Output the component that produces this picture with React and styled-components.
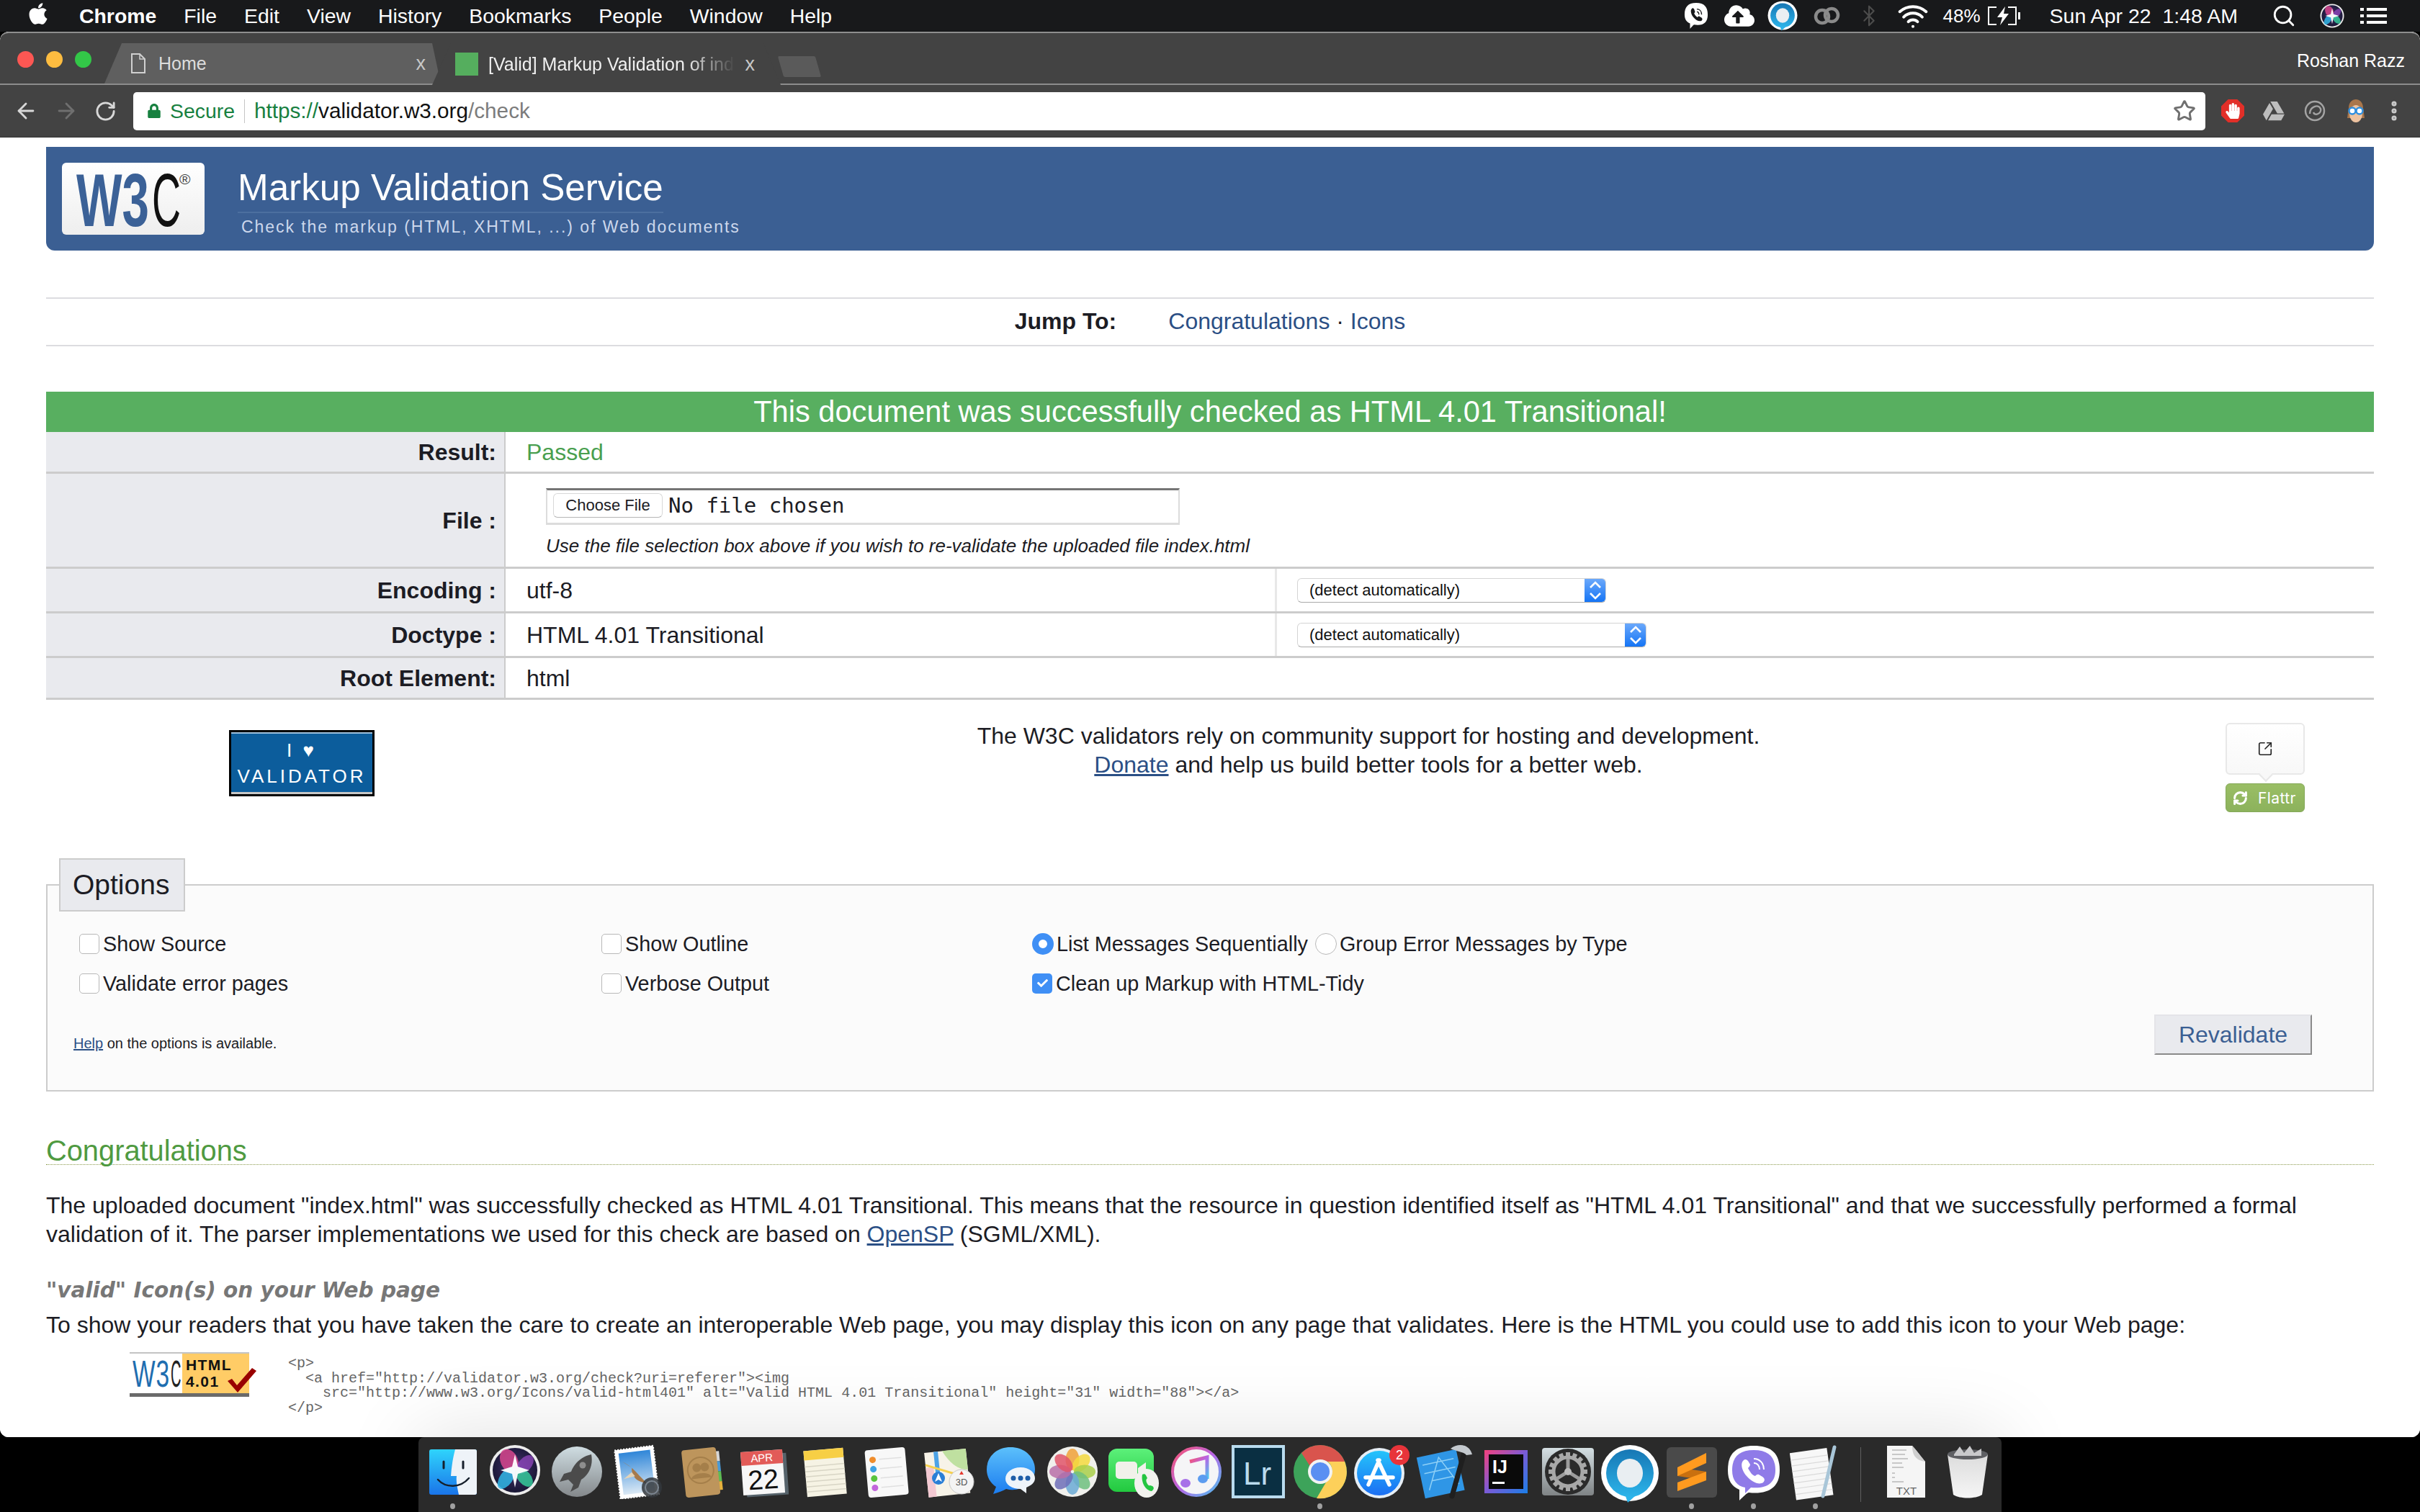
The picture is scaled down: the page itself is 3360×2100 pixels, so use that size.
import styled, { createGlobalStyle } from "styled-components";
import {
  ArrowLeft,
  ArrowRight,
  RotateCw,
  Star,
  Search,
  Bluetooth,
  Wifi,
  SquareArrowOutUpRight,
  EllipsisVertical,
  RefreshCw,
} from "lucide-react";
import { FaApple, FaLock, FaHandPaper, FaGoogleDrive, FaCloudUploadAlt, FaCheck } from "react-icons/fa";

const SANS = `"Liberation Sans", Arial, sans-serif`;
const MONO = `"Liberation Mono", "Courier New", monospace`;

const GlobalStyle = createGlobalStyle`
  html, body {
    margin: 0;
    padding: 0;
    background: #000;
  }
  body {
    font-family: ${SANS};
  }
  svg text {
    font-family: ${SANS};
  }
`;

const MENU_ITEMS = ["File", "Edit", "View", "History", "Bookmarks", "People", "Window", "Help"];

/* ---------- drawn icons ---------- */

const SiriIcon = ({ size = 72 }) => (
  <svg width={size} height={size} viewBox="0 0 72 72">
    <defs>
      <radialGradient id="siriBg" cx="50%" cy="45%" r="60%">
        <stop offset="0" stopColor="#43306e" />
        <stop offset="1" stopColor="#15152f" />
      </radialGradient>
    </defs>
    <circle cx="36" cy="36" r="35" fill="#ececec" />
    <circle cx="36" cy="36" r="31" fill="url(#siriBg)" />
    <ellipse cx="28" cy="23" rx="12" ry="17" fill="#d8468e" opacity="0.85" transform="rotate(-25 28 23)" />
    <ellipse cx="50" cy="28" rx="9" ry="15" fill="#9a4ac9" opacity="0.7" transform="rotate(40 50 28)" />
    <ellipse cx="24" cy="47" rx="9" ry="17" fill="#31b7e8" opacity="0.85" transform="rotate(35 24 47)" />
    <ellipse cx="49" cy="46" rx="9" ry="15" fill="#37d6a0" opacity="0.8" transform="rotate(-40 49 46)" />
    <polygon points="36,14 40,31 56,36 40,41 36,60 32,41 16,36 32,31" fill="#fff" opacity="0.95" />
  </svg>
);

const Finder = () => (
  <svg width="72" height="76" viewBox="0 0 72 76">
    <defs>
      <linearGradient id="finderBg" x1="0" y1="0" x2="0" y2="1">
        <stop offset="0" stopColor="#2fd4fc" />
        <stop offset="1" stopColor="#1a74e9" />
      </linearGradient>
    </defs>
    <rect x="3" y="7" width="66" height="63" rx="3" fill="url(#finderBg)" />
    <path d="M39 7H66a3 3 0 0 1 3 3V67a3 3 0 0 1-3 3H44C42 60 40 52 41 44H33C34 30 36 18 39 7Z" fill="#eef3f8" />
    <path d="M23 24V33M50 24V33" stroke="#16202c" strokeWidth="3" strokeLinecap="round" />
    <path d="M15 49C26 61 46 61 58 47" stroke="#16202c" strokeWidth="2.5" fill="none" strokeLinecap="round" />
  </svg>
);

const Launchpad = () => (
  <svg width="72" height="76" viewBox="0 0 72 76">
    <defs>
      <linearGradient id="launchBg" x1="0" y1="0" x2="0" y2="1">
        <stop offset="0" stopColor="#cfdde2" />
        <stop offset="1" stopColor="#84888b" />
      </linearGradient>
    </defs>
    <circle cx="36" cy="38" r="35" fill="url(#launchBg)" />
    <path
      d="M56 14C42 17 32 27 28 38L18 41 12 52 24 49 31 56 27 66 38 60 42 49C52 43 59 30 56 14Z"
      fill="#4b4b4b"
    />
    <circle cx="44" cy="29" r="4.5" fill="#8e8e8e" />
  </svg>
);

const Mail = () => (
  <svg width="72" height="76" viewBox="0 0 72 76">
    <defs>
      <linearGradient id="mailSky" x1="0" y1="0" x2="0" y2="1">
        <stop offset="0" stopColor="#2f86d8" />
        <stop offset="1" stopColor="#dbe9f5" />
      </linearGradient>
    </defs>
    <g transform="rotate(-7 32 38)">
      <rect x="6" y="5" width="54" height="68" fill="#fff" stroke="#fff" strokeWidth="2" strokeDasharray="2 2" />
      <rect x="11" y="10" width="44" height="58" fill="url(#mailSky)" />
      <path d="M15 22C24 28 31 36 36 44L46 57 36 52C28 48 25 38 27 32Z" fill="#a67a4c" />
      <path d="M26 38L14 46 30 44Z" fill="#e3d3b8" />
    </g>
    <circle cx="54" cy="60" r="14" fill="#33373c" opacity="0.85" />
    <circle cx="54" cy="60" r="9" fill="none" stroke="#7d8792" strokeWidth="2" />
  </svg>
);

const Contacts = () => (
  <svg width="72" height="76" viewBox="0 0 72 76">
    <g transform="rotate(-6 36 38)">
      <rect x="58" y="12" width="6" height="14" fill="#d7d7d7" />
      <rect x="58" y="26" width="6" height="14" fill="#4b9ad6" />
      <rect x="58" y="40" width="6" height="14" fill="#5ebc54" />
      <rect x="58" y="54" width="6" height="12" fill="#e7b23c" />
      <rect x="12" y="6" width="48" height="66" rx="4" fill="#bd955c" />
      <circle cx="36" cy="36" r="18" fill="none" stroke="#a57f4a" strokeWidth="2" />
      <circle cx="31" cy="32" r="6" fill="#a57f4a" />
      <circle cx="42" cy="32" r="6" fill="#a57f4a" />
      <path d="M22 47C24 38 48 38 50 47Z" fill="#a57f4a" />
    </g>
  </svg>
);

const Calendar = () => (
  <svg width="72" height="76" viewBox="0 0 72 76">
    <g transform="rotate(-4 36 38)">
      <rect x="12" y="14" width="58" height="58" fill="#56636b" />
      <rect x="7" y="9" width="58" height="60" fill="#f7f7f7" />
      <rect x="7" y="9" width="58" height="19" fill="#e25b58" />
      <text x="36" y="24" textAnchor="middle" fontSize="15" fill="#fff">APR</text>
      <text x="36" y="62" textAnchor="middle" fontSize="38" fill="#111">22</text>
    </g>
  </svg>
);

const Notes = () => (
  <svg width="72" height="76" viewBox="0 0 72 76">
    <g transform="rotate(-5 36 38)">
      <rect x="9" y="7" width="55" height="64" fill="#f6f3e4" />
      <path d="M9 7H64V20H9Z" fill="#f7cf45" />
      <path
        d="M9 29H64M9 36H64M9 43H64M9 50H64M9 57H64M9 64H64"
        stroke="#d8d5c5"
        strokeWidth="1.5"
      />
    </g>
  </svg>
);

const Reminders = () => (
  <svg width="72" height="76" viewBox="0 0 72 76">
    <g transform="rotate(-5 36 38)">
      <rect x="8" y="6" width="56" height="66" rx="4" fill="#f8f8f8" />
      <circle cx="18" cy="20" r="4.5" fill="#f08d2c" />
      <circle cx="18" cy="33" r="4.5" fill="#3da2e4" />
      <circle cx="18" cy="46" r="4.5" fill="#58c43e" />
      <circle cx="18" cy="59" r="4.5" fill="#c266db" />
      <path d="M27 20H58M27 33H58M27 46H58M27 59H58" stroke="#e0e0e0" strokeWidth="1.5" />
    </g>
  </svg>
);

const MapsIcon = () => (
  <svg width="72" height="76" viewBox="0 0 72 76">
    <g transform="rotate(-6 32 38)">
      <rect x="5" y="9" width="58" height="62" fill="#f7f3e8" />
      <path d="M30 9H63V38C50 38 38 26 30 9Z" fill="#bfe0a0" />
      <path d="M5 30H16V71H5Z" fill="#f3c9d2" />
      <path d="M18 9H24V50H18Z" fill="#4da3e6" />
      <path d="M5 26L63 50" stroke="#f6d04e" strokeWidth="3" />
    </g>
    <circle cx="22" cy="47" r="9" fill="#2a7fd6" />
    <polygon points="22,40 27,52 22,49 17,52" fill="#fff" />
    <circle cx="54" cy="52" r="17" fill="#f4f4f4" stroke="#c9c9c9" />
    <polygon points="54,37 57,42 51,42" fill="#e5392f" />
    <text x="54" y="57" textAnchor="middle" fontSize="13" fill="#555">3D</text>
  </svg>
);

const Messages = () => (
  <svg width="72" height="76" viewBox="0 0 72 76">
    <defs>
      <linearGradient id="msgBg" x1="0" y1="0" x2="0" y2="1">
        <stop offset="0" stopColor="#5cc0fb" />
        <stop offset="1" stopColor="#1b7cf0" />
      </linearGradient>
    </defs>
    <path d="M36 4C16 4 3 18 3 35C3 45 8 54 16 59L12 69C20 67 26 64 30 62C47 67 70 56 70 35C70 18 56 4 36 4Z" fill="url(#msgBg)" />
    <path d="M50 32C38 32 29 39 29 48C29 56 38 62 50 62L58 68 58 60C65 57 70 53 70 47C70 39 62 32 50 32Z" fill="#eef4fa" />
    <circle cx="40" cy="47" r="3.5" fill="#1f5ea8" />
    <circle cx="50" cy="47" r="3.5" fill="#1f5ea8" />
    <circle cx="60" cy="47" r="3.5" fill="#1f5ea8" />
  </svg>
);

const PETALS = ["#f0a13a", "#f5d93f", "#a9cf4a", "#6fbf7f", "#6baad6", "#6f6fb8", "#b86fa8", "#e0556a"];

const Photos = () => (
  <svg width="72" height="76" viewBox="0 0 72 76">
    <circle cx="36" cy="38" r="35" fill="#f0f0ec" />
    {PETALS.map((color, i) => (
      <ellipse
        key={color}
        cx="36"
        cy="21"
        rx="9.5"
        ry="15"
        fill={color}
        opacity="0.85"
        transform={`rotate(${i * 45} 36 38)`}
      />
    ))}
  </svg>
);

const FaceTime = () => (
  <svg width="72" height="76" viewBox="0 0 72 76">
    <defs>
      <linearGradient id="ftBg" x1="0" y1="0" x2="0" y2="1">
        <stop offset="0" stopColor="#5cf07a" />
        <stop offset="1" stopColor="#22c93f" />
      </linearGradient>
    </defs>
    <rect x="0" y="6" width="63" height="60" rx="12" fill="url(#ftBg)" />
    <rect x="10" y="24" width="30" height="24" rx="5" fill="#f1f1ea" />
    <path d="M41 33L52 25V47L41 39Z" fill="#f1f1ea" />
    <ellipse cx="53" cy="54" rx="17" ry="20" fill="#f2f2ee" />
    <path d="M47 42C45 52 51 64 60 65C63 63 64 60 61 58L58 57C56 58 55 57 53 53C52 50 52 49 54 47L52 43C51 41 49 41 47 42Z" fill="#25c541" />
  </svg>
);

const MusicIcon = () => (
  <svg width="72" height="76" viewBox="0 0 72 76">
    <defs>
      <linearGradient id="musicRing" x1="0" y1="0" x2="1" y2="1">
        <stop offset="0" stopColor="#f9536d" />
        <stop offset="0.5" stopColor="#b765e6" />
        <stop offset="1" stopColor="#4cc4ef" />
      </linearGradient>
    </defs>
    <circle cx="36" cy="38" r="33" fill="#f5f5f7" stroke="url(#musicRing)" strokeWidth="4" />
    <path d="M27 24L51 18V48" fill="none" stroke="url(#musicRing)" strokeWidth="5" />
    <path d="M27 24V54" fill="none" stroke="url(#musicRing)" strokeWidth="5" />
    <ellipse cx="21" cy="54" rx="7" ry="6" fill="#a770e8" />
    <ellipse cx="45" cy="48" rx="7" ry="6" fill="#5c9cf0" />
  </svg>
);

const Lightroom = () => (
  <svg width="76" height="76" viewBox="0 0 76 76">
    <rect x="1" y="1" width="74" height="74" fill="#b9dbee" />
    <rect x="5" y="5" width="66" height="66" fill="#0a2f42" />
    <text x="17" y="56" fontSize="44" fill="#b9dbee">Lr</text>
  </svg>
);

const ChromeIcon = () => (
  <svg width="76" height="76" viewBox="0 0 76 76">
    <circle cx="38" cy="38" r="37" fill="#3da35a" />
    <path d="M38 1A37 37 0 0 1 72 24H38A14 14 0 0 0 25 32L12 12A37 37 0 0 1 38 1Z" fill="#d9544d" />
    <path d="M72 24A37 37 0 0 1 33 75L50 46A14 14 0 0 0 48 24Z" fill="#fdd05a" />
    <circle cx="38" cy="38" r="17" fill="#f3f3f3" />
    <circle cx="38" cy="38" r="13" fill="#5a8ff2" />
  </svg>
);

const AppStore = () => (
  <svg width="78" height="76" viewBox="0 0 78 76">
    <defs>
      <linearGradient id="asBg" x1="0" y1="0" x2="0" y2="1">
        <stop offset="0" stopColor="#25c4fb" />
        <stop offset="1" stopColor="#1b6ef3" />
      </linearGradient>
    </defs>
    <circle cx="35" cy="40" r="35" fill="#e6eef5" />
    <circle cx="35" cy="40" r="31" fill="url(#asBg)" />
    <path d="M35 22L20 56M33 22L49 56M16 46H54" stroke="#fff" strokeWidth="5.5" strokeLinecap="round" />
    <circle cx="63" cy="15" r="14" fill="#e8343a" />
    <text x="63" y="21" textAnchor="middle" fontSize="18" fill="#fff">2</text>
  </svg>
);

const Xcode = () => (
  <svg width="78" height="76" viewBox="0 0 78 76">
    <g transform="rotate(-12 34 40)">
      <rect x="6" y="12" width="56" height="58" fill="#2f96e6" />
      <path
        d="M14 60L36 18 56 60M20 48H50M12 24H56M12 36H56"
        stroke="#8fd0f6"
        strokeWidth="1.5"
        fill="none"
      />
    </g>
    <path d="M68 8L50 72" stroke="#1f1f1f" strokeWidth="7" strokeLinecap="round" />
    <path d="M48 6C58 -2 74 -1 78 14L70 15C66 10 56 10 48 6Z" fill="#c4c9ce" />
  </svg>
);

const IntelliJ = () => (
  <svg width="64" height="76" viewBox="0 0 64 76">
    <defs>
      <linearGradient id="ijBg" x1="0" y1="0" x2="1" y2="1">
        <stop offset="0" stopColor="#f5407c" />
        <stop offset="0.5" stopColor="#7a5bd6" />
        <stop offset="1" stopColor="#1a7fe8" />
      </linearGradient>
    </defs>
    <rect x="2" y="8" width="60" height="60" fill="url(#ijBg)" />
    <rect x="8" y="14" width="48" height="48" fill="#0a0a0a" />
    <text x="13" y="40" fontSize="25" fontWeight="700" fill="#fff">IJ</text>
    <rect x="13" y="52" width="17" height="3" fill="#fff" />
  </svg>
);

const SETTING_TEETH = Array.from({ length: 16 }, (_, i) => i * 22.5);

const SystemPrefs = () => (
  <svg width="72" height="76" viewBox="0 0 72 76">
    <defs>
      <linearGradient id="prefBg" x1="0" y1="0" x2="0" y2="1">
        <stop offset="0" stopColor="#d4dfe3" />
        <stop offset="1" stopColor="#7f8385" />
      </linearGradient>
    </defs>
    <rect x="0" y="5" width="72" height="66" rx="4" fill="url(#prefBg)" />
    <circle cx="36" cy="38" r="32" fill="#2b2b2b" />
    {SETTING_TEETH.map((deg) => (
      <rect key={deg} x="33" y="11" width="6" height="9" fill="#a8a8a8" transform={`rotate(${deg} 36 38)`} />
    ))}
    <circle cx="36" cy="38" r="20" fill="none" stroke="#a8a8a8" strokeWidth="5" />
    <path d="M36 38V20M36 38L20 48M36 38L52 48" stroke="#9c9c9c" strokeWidth="5" />
    <circle cx="36" cy="38" r="5" fill="#bbb" />
  </svg>
);

const AlfredBubble = ({ width = 82, height = 82 }) => (
  <svg width={width} height={height} viewBox="0 0 82 82">
    <defs>
      <linearGradient id="bubbleRing" x1="0" y1="0" x2="0" y2="1">
        <stop offset="0" stopColor="#1777b4" />
        <stop offset="1" stopColor="#2cb4ea" />
      </linearGradient>
    </defs>
    <ellipse cx="41" cy="40" rx="40" ry="39" fill="#fff" />
    <ellipse cx="41" cy="40" rx="33" ry="33" fill="url(#bubbleRing)" />
    <ellipse cx="41" cy="40" rx="18" ry="20" fill="#e9eef2" />
    <polygon points="35,72 48,72 38,81" fill="#2cb4ea" />
  </svg>
);

const Sublime = () => (
  <svg width="72" height="76" viewBox="0 0 72 76">
    <rect x="1" y="4" width="70" height="70" rx="6" fill="#4a4a4a" />
    <polygon points="16,32 16,44 56,50 56,38" fill="#c9700f" />
    <polygon points="56,12 56,26 16,44 16,32" fill="#ff9a1f" />
    <polygon points="56,38 56,50 16,65 16,53" fill="#ff9a1f" />
  </svg>
);

const ViberGlyph = ({ size = 36 }) => (
  <svg width={size} height={size * 1.12} viewBox="0 0 36 40">
    <path d="M18 1C6 1 1 7 1 18C1 25 4 29 9 31V39C12 36 14 33 15 33C28 35 35 30 35 18C35 7 30 1 18 1Z" fill="#fff" />
    <path d="M12 9C9 11 10 17 14 22C18 27 23 29 26 27C28 25 27 23 25 22L23 21C22 20 21 21 20 22C18 21 16 19 15 16C16 15 17 14 16 13L15 10C14 9 13 8 12 9Z" fill="#18191b" />
    <path d="M19 10C23 10 26 13 26 18M19 14C21 14 22 16 22 18" stroke="#18191b" strokeWidth="1.5" fill="none" />
  </svg>
);

const ViberDock = () => (
  <svg width="76" height="80" viewBox="0 0 76 80">
    <path d="M38 2C12 2 2 14 2 36C2 50 7 58 18 63V78C24 72 28 68 31 67C58 70 74 60 74 36C74 14 64 2 38 2Z" fill="#fff" />
    <path d="M38 8C17 8 8 18 8 36C8 50 15 58 26 60V68L34 60C56 62 68 54 68 36C68 18 59 8 38 8Z" fill="#8f7be8" />
    <path d="M24 22C19 26 21 36 28 44C35 52 45 57 51 53C54 50 53 47 50 45L45 42C43 41 41 43 40 44C36 43 33 39 30 33C31 32 33 30 33 28L30 23C28 21 26 20 24 22Z" fill="#fff" />
    <path d="M38 20C46 20 52 26 52 35M38 26C43 26 46 30 46 35" stroke="#fff" strokeWidth="2" fill="none" />
  </svg>
);

const TextEdit = () => (
  <svg width="72" height="80" viewBox="0 0 72 80">
    <g transform="rotate(-8 32 40)">
      <rect x="4" y="8" width="52" height="66" fill="#f7f7f7" />
      <path
        d="M4 18H56M4 26H56M4 34H56M4 42H56M4 50H56M4 58H56M4 66H56"
        stroke="#dadada"
        strokeWidth="1.2"
      />
    </g>
    <path d="M62 4L46 72" stroke="#a9c6d8" strokeWidth="5" strokeLinecap="round" />
  </svg>
);

const TxtDoc = () => (
  <svg width="60" height="76" viewBox="0 0 60 76">
    <path d="M3 2H38L56 24V74H3Z" fill="#f5f5f5" />
    <path d="M38 2C38 14 42 22 56 24C48 14 44 8 38 2Z" fill="#cfcfcf" />
    <path d="M10 8H30M10 14H28M10 20H32M10 26H24M10 32H26M10 40H14M10 46H14M10 52H26" stroke="#9a9a9a" strokeWidth="1" />
    <text x="30" y="70" textAnchor="middle" fontSize="15" fill="#666">TXT</text>
  </svg>
);

const Trash = () => (
  <svg width="62" height="76" viewBox="0 0 62 76">
    <defs>
      <linearGradient id="trashBg" x1="0" y1="0" x2="0" y2="1">
        <stop offset="0" stopColor="#dcdcdc" />
        <stop offset="1" stopColor="#f6f6f6" />
      </linearGradient>
    </defs>
    <path d="M3 14L11 70C20 76 42 76 51 70L59 14Z" fill="url(#trashBg)" />
    <ellipse cx="31" cy="14" rx="28" ry="7" fill="#5f6064" />
    <path d="M12 14L20 3 26 12 34 2 40 12 50 6 50 16 12 16Z" fill="#c9c9cb" />
  </svg>
);

const DOCK_APPS = [
  { id: "finder", Icon: Finder, running: true },
  { id: "siri", Icon: SiriIcon },
  { id: "launchpad", Icon: Launchpad },
  { id: "mail", Icon: Mail },
  { id: "contacts", Icon: Contacts },
  { id: "calendar", Icon: Calendar },
  { id: "notes", Icon: Notes },
  { id: "reminders", Icon: Reminders },
  { id: "maps", Icon: MapsIcon },
  { id: "messages", Icon: Messages },
  { id: "photos", Icon: Photos },
  { id: "facetime", Icon: FaceTime },
  { id: "music", Icon: MusicIcon },
  { id: "lightroom", Icon: Lightroom },
  { id: "chrome", Icon: ChromeIcon, running: true },
  { id: "appstore", Icon: AppStore },
  { id: "xcode", Icon: Xcode },
  { id: "intellij", Icon: IntelliJ },
  { id: "prefs", Icon: SystemPrefs },
  { id: "bubble", Icon: AlfredBubble },
  { id: "sublime", Icon: Sublime, running: true },
  { id: "viber", Icon: ViberDock, running: true },
  { id: "textedit", Icon: TextEdit, running: true },
];

const App = () => (
  <Screen>
    <GlobalStyle />
    <MenuBar>
      <AppleMark>
        <FaApple size={34} />
      </AppleMark>
      <MenuItem $bold>Chrome</MenuItem>
      {MENU_ITEMS.map((item) => (
        <MenuItem key={item}>{item}</MenuItem>
      ))}
      <StatusArea>
        <StatusSlot>
          <ViberGlyph size={34} />
        </StatusSlot>
        <StatusSlot $left={22}>
          <FaCloudUploadAlt size={42} />
        </StatusSlot>
        <StatusSlot $left={18}>
          <AlfredBubble width={42} height={42} />
        </StatusSlot>
        <StatusSlot $left={21}>
          <svg width="39" height="30" viewBox="0 0 39 30">
            <circle cx="13" cy="16" r="9" fill="none" stroke="#8a8a8a" strokeWidth="4.5" />
            <circle cx="26" cy="14" r="9" fill="none" stroke="#8a8a8a" strokeWidth="4.5" />
          </svg>
        </StatusSlot>
        <StatusSlot $left={23} $dim>
          <Bluetooth size={32} strokeWidth={1.6} />
        </StatusSlot>
        <StatusSlot $left={23}>
          <Wifi size={44} strokeWidth={2.2} />
        </StatusSlot>
        <StatusText $left={20}>48%</StatusText>
        <StatusSlot $left={8}>
          <svg width="48" height="28" viewBox="0 0 48 28">
            <path d="M14 2H3V26H14M30 2H41V26H30" fill="none" stroke="#fff" strokeWidth="2" />
            <path d="M26 1L15 16H22L19 27 31 11H24Z" fill="#fff" />
            <rect x="44" y="9" width="3" height="10" fill="#fff" />
          </svg>
        </StatusSlot>
        <StatusText $left={40}>Sun Apr 22&nbsp;&nbsp;1:48 AM</StatusText>
        <StatusSlot $left={47}>
          <Search size={34} strokeWidth={2} />
        </StatusSlot>
        <StatusSlot $left={33}>
          <SiriIcon size={34} />
        </StatusSlot>
        <StatusSlot $left={22}>
          <svg width="37" height="22" viewBox="0 0 37 22">
            <path d="M0 0H5V4H0ZM9 0H37V4H9ZM0 9H5V13H0ZM9 9H37V13H9ZM0 18H5V22H0ZM9 18H37V22H9Z" fill="#fff" />
          </svg>
        </StatusSlot>
      </StatusArea>
    </MenuBar>

    <BrowserWindow>
      <TabStrip>
        <TrafficLights>
          <TrafficLight $color="#fc5753" />
          <TrafficLight $color="#fdbc40" />
          <TrafficLight $color="#33c748" />
        </TrafficLights>
        <Tab>
          <DocIcon width="20" height="28" viewBox="0 0 20 28">
            <path d="M1 1H12L19 8V27H1Z" fill="none" stroke="#d0d0d0" strokeWidth="2" />
            <path d="M12 1V8H19" fill="none" stroke="#d0d0d0" strokeWidth="1.5" />
          </DocIcon>
          <TabTitle>Home</TabTitle>
          <TabClose>x</TabClose>
        </Tab>
        <ActiveTab>
          <Favicon />
          <TabTitle $fade>[Valid] Markup Validation of index.html</TabTitle>
          <TabClose>x</TabClose>
        </ActiveTab>
        <NewTab />
        <UserName>Roshan Razz</UserName>
      </TabStrip>

      <Toolbar>
        <NavButton>
          <ArrowLeft size={34} strokeWidth={2} />
        </NavButton>
        <NavButton $dim>
          <ArrowRight size={34} strokeWidth={2} />
        </NavButton>
        <NavButton>
          <RotateCw size={31} strokeWidth={2.2} />
        </NavButton>
        <Omnibox>
          <LockMark>
            <FaLock size={20} />
          </LockMark>
          <SecureLabel>Secure</SecureLabel>
          <OmniDivider />
          <UrlPart $color="#17803f">https://</UrlPart>
          <UrlPart $color="#111">validator.w3.org</UrlPart>
          <UrlPart $color="#7c7c7c">/check</UrlPart>
          <BookmarkStar>
            <Star size={32} strokeWidth={2.2} />
          </BookmarkStar>
        </Omnibox>
        <Extensions>
          <ExtSlot>
            <StopSign>
              <FaHandPaper size={22} color="#fff" />
            </StopSign>
          </ExtSlot>
          <ExtSlot>
            <FaGoogleDrive size={30} color="#bdbdbd" />
          </ExtSlot>
          <ExtSlot>
            <svg width="30" height="32" viewBox="0 0 30 32">
              <circle cx="15" cy="16" r="13" fill="none" stroke="#a3a3a3" strokeWidth="2.5" />
              <path d="M8 20C8 10 20 6 23 13C25 19 15 24 13 18" fill="none" stroke="#a3a3a3" strokeWidth="2.5" />
            </svg>
          </ExtSlot>
          <ExtSlot>
            <svg width="30" height="36" viewBox="0 0 30 36">
              <path d="M5 14C5 -2 25 -2 25 14L27 28H3Z" fill="#a9764b" />
              <ellipse cx="15" cy="22" rx="9" ry="12" fill="#eec3a0" />
              <circle cx="10" cy="18" r="4.5" fill="#fff" stroke="#2e8fe0" strokeWidth="2.5" />
              <circle cx="20" cy="18" r="4.5" fill="#fff" stroke="#2e8fe0" strokeWidth="2.5" />
            </svg>
          </ExtSlot>
          <MenuDots>
            <EllipsisVertical size={34} strokeWidth={3} />
          </MenuDots>
        </Extensions>
      </Toolbar>

      <Page>
        <Banner>
          <LogoCard>
            <svg width="198" height="100" viewBox="0 0 198 100">
              <text
                x="20"
                y="88"
                fontSize="103"
                fontWeight="700"
                fill="#3b6197"
                textLength="101"
                lengthAdjust="spacingAndGlyphs"
              >
                W3
              </text>
              <text x="125" y="88" fontSize="103" fill="#111" textLength="40" lengthAdjust="spacingAndGlyphs">
                C
              </text>
              <text x="163" y="30" fontSize="21" fill="#444">®</text>
            </svg>
          </LogoCard>
          <BannerText>
            <BannerTitle>Markup Validation Service</BannerTitle>
            <BannerSubtitle>Check the markup (HTML, XHTML, ...) of Web documents</BannerSubtitle>
          </BannerText>
        </Banner>

        <JumpNav>
          <JumpLabel>Jump To:</JumpLabel>
          <JumpLinks>
            <PageLink $plain>Congratulations</PageLink> · <PageLink $plain>Icons</PageLink>
          </JumpLinks>
        </JumpNav>

        <ResultTitle>This document was successfully checked as HTML 4.01 Transitional!</ResultTitle>
        <ResultTable>
          <Row>
            <RowLabel>Result:</RowLabel>
            <RowValue $passed>Passed</RowValue>
          </Row>
          <Row>
            <RowLabel>File :</RowLabel>
            <FileCell>
              <FileBox>
                <ChooseFile>Choose File</ChooseFile>
                <NoFile>No file chosen</NoFile>
              </FileBox>
              <FileNote>
                Use the file selection box above if you wish to re-validate the uploaded file index.html
              </FileNote>
            </FileCell>
          </Row>
          <Row>
            <RowLabel>Encoding :</RowLabel>
            <RowValue $half>utf-8</RowValue>
            <SelectCell>
              <FakeSelect $width={429}>
                (detect automatically)
                <SelectArrows>
                  <ChevronPair />
                </SelectArrows>
              </FakeSelect>
            </SelectCell>
          </Row>
          <Row>
            <RowLabel>Doctype :</RowLabel>
            <RowValue $half>HTML 4.01 Transitional</RowValue>
            <SelectCell>
              <FakeSelect $width={485}>
                (detect automatically)
                <SelectArrows>
                  <ChevronPair />
                </SelectArrows>
              </FakeSelect>
            </SelectCell>
          </Row>
          <Row>
            <RowLabel>Root Element:</RowLabel>
            <RowValue>html</RowValue>
          </Row>
        </ResultTable>

        <Community>
          <ValidatorBadge>
            <span>I ♥</span>
            <span>VALIDATOR</span>
          </ValidatorBadge>
          <CommunityText>
            The W3C validators rely on community support for hosting and development.
            <br />
            <PageLink>Donate</PageLink> and help us build better tools for a better web.
          </CommunityText>
          <FlattrWidget>
            <FlattrCount>
              <SquareArrowOutUpRight size={22} strokeWidth={1.8} color="#222" />
            </FlattrCount>
            <FlattrButton>
              <RefreshCw size={21} strokeWidth={3.5} />
              Flattr
            </FlattrButton>
          </FlattrWidget>
        </Community>

        <OptionsSet>
          <OptionsLegend>Options</OptionsLegend>
          <OptionsGrid>
            <Option>
              <CheckBox />
              Show Source
            </Option>
            <Option>
              <CheckBox />
              Show Outline
            </Option>
            <Option>
              <RadioDot $on />
              List Messages Sequentially
              <RadioDot $spaced />
              Group Error Messages by Type
            </Option>
            <Option>
              <CheckBox />
              Validate error pages
            </Option>
            <Option>
              <CheckBox />
              Verbose Output
            </Option>
            <Option>
              <CheckBox $on>
                <FaCheck size={15} color="#fff" />
              </CheckBox>
              Clean up Markup with HTML-Tidy
            </Option>
          </OptionsGrid>
          <OptionsFooter>
            <HelpLine>
              <PageLink>Help</PageLink> on the options is available.
            </HelpLine>
            <Revalidate>Revalidate</Revalidate>
          </OptionsFooter>
        </OptionsSet>

        <SectionTitle>Congratulations</SectionTitle>
        <BodyText>
          The uploaded document "index.html" was successfully checked as HTML 4.01 Transitional. This means that
          the resource in question identified itself as "HTML 4.01 Transitional" and that we successfully performed
          a formal validation of it. The parser implementations we used for this check are based on{" "}
          <PageLink>OpenSP</PageLink> (SGML/XML).
        </BodyText>
        <IconsTitle>"valid" Icon(s) on your Web page</IconsTitle>
        <BodyText $tight>
          To show your readers that you have taken the care to create an interoperable Web page, you may display
          this icon on any page that validates. Here is the HTML you could use to add this icon to your Web page:
        </BodyText>
        <SnippetRow>
          <ValidIcon>
            <ValidW3>
              <svg width="73" height="55" viewBox="0 0 73 55">
                <text x="4" y="46" fontSize="52" fill="#1f6eb0" textLength="52" lengthAdjust="spacingAndGlyphs">
                  W3
                </text>
                <text x="57" y="46" fontSize="52" fill="#222" textLength="15" lengthAdjust="spacingAndGlyphs">
                  C
                </text>
              </svg>
            </ValidW3>
            <ValidHtml>
              HTML
              <br />
              4.01
            </ValidHtml>
            <ValidCheck width="44" height="34" viewBox="0 0 44 34">
              <path d="M4 18L10 15 17 24 38 0 44 4 18 34Z" fill="#990000" />
            </ValidCheck>
          </ValidIcon>
          <Snippet>{`<p>
  <a href="http://validator.w3.org/check?uri=referer"><img
    src="http://www.w3.org/Icons/valid-html401" alt="Valid HTML 4.01 Transitional" height="31" width="88"></a>
</p>`}</Snippet>
        </SnippetRow>
      </Page>
    </BrowserWindow>

    <Dock>
      {DOCK_APPS.map(({ id, Icon, running }) => (
        <DockSlot key={id}>
          <Icon />
          {running && <RunningDot />}
        </DockSlot>
      ))}
      <DockDivider />
      <DockSlot $narrow>
        <TxtDoc />
      </DockSlot>
      <DockSlot $narrow>
        <Trash />
      </DockSlot>
    </Dock>
  </Screen>
);

const ChevronPair = () => (
  <svg width="20" height="28" viewBox="0 0 20 28">
    <path d="M3 10L10 3 17 10M3 18L10 25 17 18" fill="none" stroke="#fff" strokeWidth="2.6" />
  </svg>
);

const Screen = styled.div`
  width: 3360px;
  height: 2100px;
  display: flex;
  flex-direction: column;
  overflow: hidden;
  background: #000;
`;

const MenuBar = styled.header`
  flex: none;
  height: 44px;
  display: flex;
  align-items: center;
  gap: 38px;
  padding-left: 36px;
  background: #18191b;
  color: #fff;
  font-size: 28.4px;
`;

const AppleMark = styled.span`
  display: flex;
  margin-right: 2px;
  margin-top: -6px;
`;

const MenuItem = styled.span`
  font-weight: ${(p) => (p.$bold ? 700 : 400)};
`;

const StatusArea = styled.div`
  margin-left: auto;
  display: flex;
  align-items: center;
  padding-right: 46px;
`;

const StatusSlot = styled.span`
  display: flex;
  margin-left: ${(p) => p.$left || 0}px;
  color: ${(p) => (p.$dim ? "#4c4c4c" : "#fff")};
`;

const StatusText = styled.span`
  margin-left: ${(p) => p.$left}px;
  font-size: ${(p) => (p.$left > 30 ? 28.5 : 26)}px;
`;

const BrowserWindow = styled.div`
  flex: 1;
  min-height: 0;
  display: flex;
  flex-direction: column;
  overflow: hidden;
  border-radius: 12px;
  background: #fff;
`;

const TabStrip = styled.div`
  flex: none;
  height: 74px;
  box-sizing: border-box;
  display: flex;
  align-items: flex-end;
  padding-left: 24px;
  background: #434343;
  border-top: 2px solid #8e8e8e;
  border-bottom: 2px solid #8c8c8c;
  border-radius: 12px 12px 0 0;
  color: #ddd;
  font-size: 25px;
`;

const TrafficLights = styled.div`
  align-self: center;
  display: flex;
  gap: 17px;
  margin-top: 2px;
`;

const TrafficLight = styled.span`
  width: 23px;
  height: 23px;
  border-radius: 50%;
  background: ${(p) => p.$color};
`;

const Tab = styled.div`
  box-sizing: border-box;
  width: 467px;
  height: 56px;
  margin-left: 18px;
  display: flex;
  align-items: center;
  padding: 0 21px 0 37px;
  background: #5f5f5f;
  clip-path: polygon(0 100%, 24px 0, 455px 0, 100% 100%);
`;

const ActiveTab = styled(Tab)`
  width: 484px;
  height: 58px;
  margin-left: -12px;
  margin-bottom: -2px;
  padding: 0 36px 0 32px;
  background: #434343;
  color: #f0f0f0;
  clip-path: polygon(0 100%, 26px 0, 460px 0, 100% 100%);
`;

const DocIcon = styled.svg`
  flex: none;
  margin-right: 18px;
`;

const Favicon = styled.span`
  flex: none;
  width: 32px;
  height: 32px;
  margin-right: 14px;
  background: #55ae5e;
`;

const TabTitle = styled.span`
  flex: 1;
  min-width: 0;
  white-space: nowrap;
  overflow: hidden;
  mask-image: ${(p) => (p.$fade ? "linear-gradient(90deg, #000 80%, transparent)" : "none")};
`;

const TabClose = styled.span`
  flex: none;
  margin-left: 14px;
  font-size: 27px;
  color: #c8c8c8;
`;

const NewTab = styled.span`
  align-self: flex-end;
  width: 52px;
  height: 29px;
  margin: 0 0 9px 0;
  background: #5a5a5a;
  border-radius: 2px;
  transform: skewX(16deg);
`;

const UserName = styled.span`
  align-self: center;
  margin-left: auto;
  margin-top: 6px;
  padding-right: 21px;
  color: #fff;
`;

const Toolbar = styled.div`
  flex: none;
  height: 73px;
  box-sizing: border-box;
  display: flex;
  align-items: center;
  padding-left: 19px;
  background: #434343;
  border-bottom: 1px solid #333;
`;

const NavButton = styled.span`
  display: flex;
  width: 56px;
  color: ${(p) => (p.$dim ? "#6f6f6f" : "#d8d8d8")};
`;

const Omnibox = styled.div`
  box-sizing: border-box;
  flex: none;
  width: 2877px;
  height: 53px;
  margin-left: -2px;
  display: flex;
  align-items: center;
  padding: 0 13px 0 19px;
  background: #fff;
  border-radius: 5px;
  font-size: 29.7px;
`;

const LockMark = styled.span`
  display: flex;
  color: #17803f;
`;

const SecureLabel = styled.span`
  margin-left: 12px;
  color: #17803f;
  font-size: 28.4px;
`;

const OmniDivider = styled.span`
  width: 1px;
  height: 33px;
  margin: 0 13px 0 13px;
  background: #c5c5c5;
`;

const UrlPart = styled.span`
  color: ${(p) => p.$color};
`;

const BookmarkStar = styled.span`
  display: flex;
  margin-left: auto;
  color: #6f6f6f;
`;

const Extensions = styled.div`
  display: flex;
  align-items: center;
  margin-left: 22px;
`;

const ExtSlot = styled.span`
  display: flex;
  justify-content: center;
  width: 32px;
  margin-right: 25px;
`;

const StopSign = styled.span`
  display: flex;
  align-items: center;
  justify-content: center;
  width: 32px;
  height: 32px;
  background: #e22f28;
  clip-path: polygon(30% 0, 70% 0, 100% 30%, 100% 70%, 70% 100%, 30% 100%, 0 70%, 0 30%);
`;

const MenuDots = styled.span`
  display: flex;
  margin-left: -5px;
  color: #c9c9c9;
`;

const Page = styled.main`
  flex: 1;
  min-height: 0;
  overflow: hidden;
  padding: 13px 64px 0;
  background: #fff;
  color: #1c1c24;
  font-size: 32px;
  line-height: 40px;
`;

const Banner = styled.section`
  height: 144px;
  display: flex;
  align-items: flex-start;
  padding: 22px 0 0 22px;
  box-sizing: border-box;
  background: #3b5f93;
  border-radius: 0 0 12px 12px;
  color: #fff;
`;

const LogoCard = styled.div`
  flex: none;
  width: 198px;
  height: 100px;
  background: linear-gradient(#ffffff, #eeeeee);
  border-radius: 6px;
  svg {
    display: block;
  }
`;

const BannerText = styled.div`
  margin: 7px 0 0 46px;
`;

const BannerTitle = styled.h1`
  width: fit-content;
  margin: 0;
  padding-bottom: 5px;
  font-size: 51.2px;
  line-height: 56px;
  font-weight: 400;
  border-bottom: 2px solid #4c6f9f;
`;

const BannerSubtitle = styled.p`
  margin: 5px 0 0 5px;
  font-size: 23px;
  line-height: 28px;
  letter-spacing: 1.95px;
  color: #cdd8ec;
`;

const JumpNav = styled.nav`
  height: 68px;
  box-sizing: border-box;
  margin-top: 65px;
  padding-bottom: 3px;
  display: flex;
  align-items: center;
  justify-content: center;
  gap: 72px;
  border-top: 2px solid #dcdce0;
  border-bottom: 2px solid #dcdce0;
`;

const JumpLabel = styled.strong`
  font-weight: 700;
`;

const JumpLinks = styled.span``;

const PageLink = styled.a`
  color: #2b4f85;
  text-decoration: ${(p) => (p.$plain ? "none" : "underline")};
`;

const ResultTitle = styled.h2`
  height: 56px;
  margin: 63px 0 0;
  background: #58af60;
  color: #fff;
  text-align: center;
  font-size: 41.6px;
  line-height: 56px;
  font-weight: 400;
`;

const ResultTable = styled.section`
  display: flex;
  flex-direction: column;
`;

const Row = styled.div`
  display: flex;
  border-bottom: 3px solid #cccccc;
  min-height: 55px;
`;

const RowLabel = styled.div`
  flex: none;
  width: 638px;
  box-sizing: border-box;
  display: flex;
  align-items: center;
  justify-content: flex-end;
  padding-right: 11px;
  background: #e9eaee;
  border-right: 2px solid #cccccc;
  font-weight: 700;
`;

const RowValue = styled.div`
  box-sizing: border-box;
  flex: ${(p) => (p.$half ? "none" : 1)};
  width: ${(p) => (p.$half ? "1071px" : "auto")};
  display: flex;
  align-items: center;
  padding-left: 29px;
  color: ${(p) => (p.$passed ? "#4a9f4f" : "inherit")};
  border-right: ${(p) => (p.$half ? "3px solid #e8e8e8" : "0")};
`;

const SelectCell = styled.div`
  flex: 1;
  display: flex;
  align-items: center;
  padding-left: 28px;
  min-height: 59px;
`;

const FakeSelect = styled.div`
  width: ${(p) => p.$width}px;
  height: 34px;
  box-sizing: border-box;
  display: flex;
  align-items: center;
  justify-content: space-between;
  padding-left: 16px;
  border: 1px solid #d4d4d4;
  border-bottom-color: #a9a9a9;
  border-radius: 6px;
  background: #fff;
  font-size: 22px;
  color: #111;
  overflow: hidden;
`;

const SelectArrows = styled.span`
  width: 29px;
  height: 34px;
  display: flex;
  align-items: center;
  justify-content: center;
  background: linear-gradient(#6eaafb, #1273f5);
`;

const FileCell = styled.div`
  flex: 1;
  height: 129px;
  box-sizing: border-box;
  padding: 20px 0 0 56px;
`;

const FileBox = styled.div`
  width: 880px;
  height: 51px;
  box-sizing: border-box;
  display: flex;
  align-items: center;
  padding: 0 0 3px 8px;
  background: #fff;
  border: 2px solid #dcdcdc;
  border-top: 3px solid #757575;
  border-bottom: 3px solid #dcdcdc;
`;

const ChooseFile = styled.span`
  width: 152px;
  height: 34px;
  box-sizing: border-box;
  display: flex;
  align-items: center;
  justify-content: center;
  border: 1px solid #d8d8d8;
  border-bottom-color: #b5b5b5;
  border-radius: 6px;
  font-size: 22px;
`;

const NoFile = styled.span`
  margin-left: 8px;
  font-family: "DejaVu Sans Mono", monospace;
  font-size: 29px;
  line-height: 34px;
`;

const FileNote = styled.p`
  margin: 12px 0 0;
  font-size: 26px;
  line-height: 34px;
  font-style: italic;
`;

const Community = styled.section`
  height: 220px;
  box-sizing: border-box;
  display: flex;
  align-items: flex-start;
  padding: 32px 96px 0 254px;
`;

const ValidatorBadge = styled.div`
  flex: none;
  width: 202px;
  height: 92px;
  margin-top: 10px;
  box-sizing: border-box;
  display: flex;
  flex-direction: column;
  align-items: center;
  justify-content: center;
  background: #0c5d9c;
  border: 3px solid #000;
  box-shadow: inset 0 2px 0 #9cc0dc, inset 0 -3px 0 #c6c6c6;
  color: #fff;
  font-size: 26px;
  line-height: 36px;
  letter-spacing: 4px;
`;

const CommunityText = styled.p`
  flex: 1;
  margin: -2px 0 0;
  padding-left: 190px;
  text-align: center;
`;

const FlattrWidget = styled.div`
  flex: none;
  width: 110px;
`;

const FlattrCount = styled.div`
  position: relative;
  height: 72px;
  box-sizing: border-box;
  display: flex;
  align-items: center;
  justify-content: center;
  border: 2px solid #e8e8e8;
  border-radius: 6px;
  background: linear-gradient(#fff, #f8f8f8);
  &::after {
    content: "";
    position: absolute;
    left: 50%;
    bottom: -9px;
    width: 12px;
    height: 12px;
    margin-left: -6px;
    transform: rotate(45deg);
    background: #f8f8f8;
    border-right: 2px solid #e8e8e8;
    border-bottom: 2px solid #e8e8e8;
  }
`;

const FlattrButton = styled.div`
  height: 40px;
  margin-top: 12px;
  box-sizing: border-box;
  display: flex;
  align-items: center;
  gap: 14px;
  padding-left: 9px;
  background: linear-gradient(#9abe65, #8cb25c);
  border: 1px solid #84a858;
  border-radius: 6px;
  color: #fff;
  font-family: Inter, sans-serif;
  font-size: 21px;
  line-height: 1;
  letter-spacing: 0.4px;
`;

const OptionsSet = styled.fieldset`
  box-sizing: border-box;
  margin: 0;
  padding: 17px 84px 45px 44px;
  min-width: 0;
  background: #fbfbfb;
  border: 2px solid #cccccc;
  font-size: 28.8px;
`;

const OptionsLegend = styled.legend`
  margin-left: -28px;
  box-sizing: border-box;
  width: 175px;
  height: 74px;
  padding: 0 0 0 17px;
  background: #e9eaee;
  border: 2px solid #cccccc;
  font-size: 39px;
  line-height: 70px;
`;

const OptionsGrid = styled.div`
  display: grid;
  grid-template-columns: 725px 598px 1fr;
  grid-auto-rows: 55px;
  align-items: center;
`;

const Option = styled.label`
  display: flex;
  align-items: center;
  white-space: nowrap;
`;

const CheckBox = styled.span`
  flex: none;
  width: 28px;
  height: 28px;
  box-sizing: border-box;
  margin-right: 5px;
  display: flex;
  align-items: center;
  justify-content: center;
  border: ${(p) => (p.$on ? "0" : "1px solid #b8b8b8")};
  border-radius: 5px;
  background: ${(p) => (p.$on ? "#3f8ff5" : "#fff")};
`;

const RadioDot = styled.span`
  flex: none;
  width: 30px;
  height: 30px;
  box-sizing: border-box;
  margin: 0 4px 0 ${(p) => (p.$spaced ? 10 : 0)}px;
  border-radius: 50%;
  background: #fff;
  border: ${(p) => (p.$on ? "9px solid #3f8ff5" : "1px solid #b8b8b8")};
`;

const OptionsFooter = styled.div`
  display: flex;
  align-items: center;
  justify-content: space-between;
  margin-top: 12px;
`;

const HelpLine = styled.p`
  margin: 24px 0 0 -8px;
  font-size: 20px;
`;

const Revalidate = styled.button`
  width: 219px;
  height: 56px;
  padding: 0;
  background: #e9eaee;
  border: 2px solid;
  border-color: #e4e4e8 #8a8a8a #8a8a8a #e4e4e8;
  color: #3b5f93;
  font-family: ${SANS};
  font-size: 32px;
`;

const SectionTitle = styled.h3`
  margin: 64px 0 0;
  font-size: 39.8px;
  line-height: 37px;
  font-weight: 400;
  color: #4f9a41;
  border-bottom: 1px dotted #8a9a4a;
`;

const BodyText = styled.p`
  margin: ${(p) => (p.$tight ? "8px" : "36px")} 0 0;
`;

const IconsTitle = styled.h4`
  margin: 38px 0 0;
  font-family: "DejaVu Sans", sans-serif;
  font-size: 29.5px;
  line-height: 40px;
  font-style: italic;
  font-weight: 700;
  color: #777777;
`;

const SnippetRow = styled.div`
  display: flex;
  align-items: flex-start;
  gap: 54px;
  margin-top: 18px;
  padding-left: 116px;
`;

const ValidIcon = styled.div`
  position: relative;
  flex: none;
  width: 166px;
  height: 62px;
  box-sizing: border-box;
  display: flex;
  border-top: 2px solid #c4c4c4;
  border-bottom: 5px solid #6a6a6a;
  font-size: 21px;
  line-height: 23px;
  letter-spacing: 1.4px;
`;

const ValidW3 = styled.span`
  flex: none;
  width: 73px;
  background: #fff;
  svg {
    display: block;
  }
`;

const ValidHtml = styled.span`
  flex: 1;
  padding: 4px 0 0 5px;
  background: #ffcc66;
  font-weight: 700;
  color: #111;
`;

const ValidCheck = styled.svg`
  position: absolute;
  right: -10px;
  top: 20px;
`;

const Snippet = styled.pre`
  margin: 6px 0 0;
  font-family: ${MONO};
  font-size: 20px;
  line-height: 20.5px;
  color: #666666;
`;

const Dock = styled.footer`
  position: relative;
  flex: none;
  width: 2198px;
  height: 104px;
  margin: 0 auto;
  box-sizing: border-box;
  display: flex;
  padding-left: 5px;
  background: #2a2a2a;
  border-radius: 8px 8px 0 0;
  box-shadow: 0 0 110px rgba(0, 0, 0, 0.13);
`;

const DockSlot = styled.div`
  position: relative;
  flex: none;
  width: ${(p) => (p.$narrow ? 85 : 86)}px;
  display: flex;
  justify-content: center;
  padding-top: 10px;
  box-sizing: border-box;
  svg {
    display: block;
  }
`;

const RunningDot = styled.span`
  position: absolute;
  left: 50%;
  bottom: 4px;
  width: 7px;
  height: 8px;
  margin-left: -4px;
  border-radius: 50%;
  background: #a0a0a0;
`;

const DockDivider = styled.span`
  flex: none;
  width: 1px;
  height: 76px;
  margin: 14px 20px 0 19px;
  background: #5f5f5f;
`;

export default App;
